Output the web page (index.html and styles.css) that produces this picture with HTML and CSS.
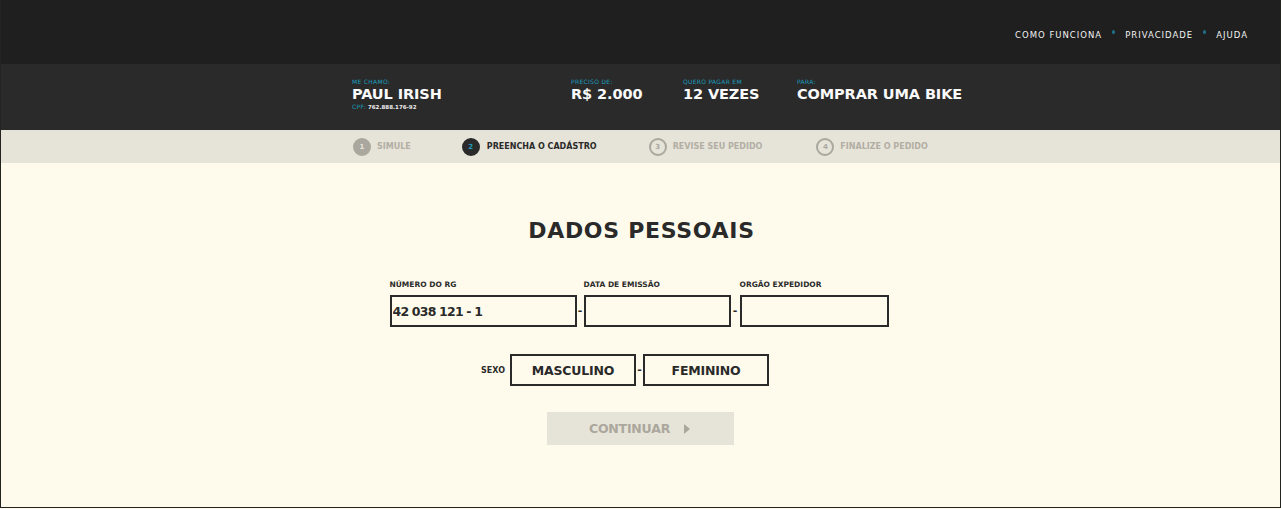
FILE: index.html
```html
<!DOCTYPE html>
<html lang="pt-BR">
<head>
<meta charset="utf-8">
<title>Dados pessoais</title>
<link rel="stylesheet" href="styles.css">
</head>
<body>
<div class="page">
    <div class="topbar">
        <ul class="nav">
            <li><a href="#">Como funciona</a></li>
            <li class="dot"></li>
            <li><a href="#">Privacidade</a></li>
            <li class="dot"></li>
            <li><a href="#">Ajuda</a></li>
        </ul>
    </div>

    <div class="summary">
        <div class="sum-item sum-name">
            <span class="sum-label">Me chamo:</span>
            <span class="sum-value">Paul Irish</span>
            <span class="cpf"><span class="sum-label">CPF:</span> 762.888.176-92</span>
        </div>
        <div class="sum-item sum-price">
            <span class="sum-label">Preciso de:</span>
            <span class="sum-value">R$ 2.000</span>
        </div>
        <div class="sum-item sum-times">
            <span class="sum-label">Quero pagar em</span>
            <span class="sum-value">12 vezes</span>
        </div>
        <div class="sum-item">
            <span class="sum-label">Para:</span>
            <span class="sum-value">Comprar uma bike</span>
        </div>
    </div>

    <div class="steps">
        <div class="step done"><span class="num">1</span>Simule</div>
        <div class="step current"><span class="num">2</span>Preencha o cadástro</div>
        <div class="step"><span class="num">3</span>Revise seu pedido</div>
        <div class="step"><span class="num">4</span>Finalize o pedido</div>
    </div>

    <div class="main">
        <h1>Dados pessoais</h1>

        <div class="row-rg">
            <div class="field f-rg">
                <label>Número do RG</label>
                <input type="text" value="42 038 121 - 1">
            </div>
            <span class="sep">-</span>
            <div class="field f-date">
                <label>Data de emissão</label>
                <input type="text">
            </div>
            <span class="sep">-</span>
            <div class="field f-org">
                <label>Orgão expedidor</label>
                <input type="text">
            </div>
        </div>

        <div class="row-sex">
            <span class="sex-label">Sexo</span>
            <button class="choice">Masculino</button>
            <span class="sep">-</span>
            <button class="choice">Feminino</button>
        </div>

        <button class="continue">Continuar <span class="arrow"></span></button>
    </div>
</div>
</body>
</html>
```

FILE: styles.css
```css
html, body { margin: 0; padding: 0; }
body { font-family: "DejaVu Sans", sans-serif; font-weight: bold; color: #2a2a2a; background: #fffbec; }

.page { height: 507px; border: 1px solid #23241f; border-top: 0; display: flex; flex-direction: column; }

/* top navigation */
.topbar { height: 64px; background: #1f1f1f; display: flex; justify-content: flex-end; align-items: center; padding-right: 32px; }
.nav { list-style: none; margin: 0; padding: 0; display: flex; align-items: center; gap: 10px; }
.nav a { color: #f2f2f2; text-decoration: none; text-transform: uppercase; font-size: 8.5px; letter-spacing: 1px; font-weight: normal; }
.nav .dot { width: 3px; height: 4px; border-radius: 2px; background: #1f6f86; }

/* summary */
.summary { height: 66px; background: #2a2a2a; display: flex; padding-left: 351px; padding-top: 14px; box-sizing: border-box; }
.sum-item { display: flex; flex-direction: column; text-transform: uppercase; }
.sum-name { width: 219px; }
.sum-price { width: 112px; }
.sum-times { width: 114px; }
.sum-label { color: #1a9dbf; font-size: 6px; letter-spacing: 0.3px; font-weight: normal; line-height: 8px; }
.sum-value { color: #fafafa; font-size: 14.5px; line-height: 17px; letter-spacing: -0.1px; }
.cpf { color: #f0f0f0; font-size: 5.5px; line-height: 8px; }

/* steps */
.steps { height: 33px; background: #e6e3d8; display: flex; align-items: center; padding-left: 352px; box-sizing: border-box; }
.step { display: flex; align-items: center; font-size: 8px; text-transform: uppercase; color: #b2aea4; }
.step .num { width: 14px; height: 14px; border: 2px solid #aaa79e; border-radius: 50%; display: flex; align-items: center; justify-content: center; font-size: 7px; margin-right: 6px; color: #aaa79e; }
.step.done .num { background: #aaa79e; color: #e6e3d8; }
.step.current { color: #2a2a2a; }
.step.current .num { background: #2a2a2a; border-color: #2a2a2a; color: #1a9dbf; margin-right: 7px; }
.step:nth-child(1) { margin-right: 51px; }
.step:nth-child(2) { margin-right: 52px; }
.step:nth-child(3) { margin-right: 54px; }

/* main form */
.main { flex: 1; display: flex; flex-direction: column; align-items: center; }
h1 { margin: 54px 0 0; font-size: 22px; letter-spacing: 0.7px; line-height: 28px; padding-left: 2px; text-transform: uppercase; }

.row-rg { display: flex; align-items: flex-end; margin-top: 35px; padding-right: 3px; }
.field { display: flex; flex-direction: column; }
.field label { font-size: 7.5px; text-transform: uppercase; margin-bottom: 6px; line-height: 9px; }
.field input { height: 32px; box-sizing: border-box; border: 2px solid #2a2a2a; background: #fffbec; font-family: inherit; font-weight: bold; font-size: 12.5px; padding: 0 1px; color: #2a2a2a; outline: none; letter-spacing: -0.8px; }
.f-rg input { width: 187px; }
.f-date input { width: 147px; }
.f-org input { width: 149px; }
.sep { font-size: 11px; width: 7px; text-align: center; line-height: 32px; }
.row-rg .sep:nth-of-type(2) { width: 9px; }

.row-sex { display: flex; align-items: center; margin-top: 27px; padding-right: 31px; }
.sex-label { font-size: 8px; text-transform: uppercase; margin-right: 5px; }
.choice { width: 126px; height: 32px; border: 2px solid #2a2a2a; background: #fffbec; font-family: inherit; font-weight: bold; font-size: 12.5px; text-transform: uppercase; color: #2a2a2a; letter-spacing: -0.2px; }
.row-sex .sep { width: 7px; }

.continue { margin-top: 26px; width: 187px; height: 33px; border: 0; background: #e6e3d8; color: #aba79c; font-family: inherit; font-weight: bold; font-size: 12.5px; text-transform: uppercase; letter-spacing: -0.2px; display: flex; align-items: center; justify-content: center; gap: 14px; padding-left: 4px; }
.arrow { width: 0; height: 0; border-left: 6px solid #aba79c; border-top: 5px solid transparent; border-bottom: 5px solid transparent; }
```
